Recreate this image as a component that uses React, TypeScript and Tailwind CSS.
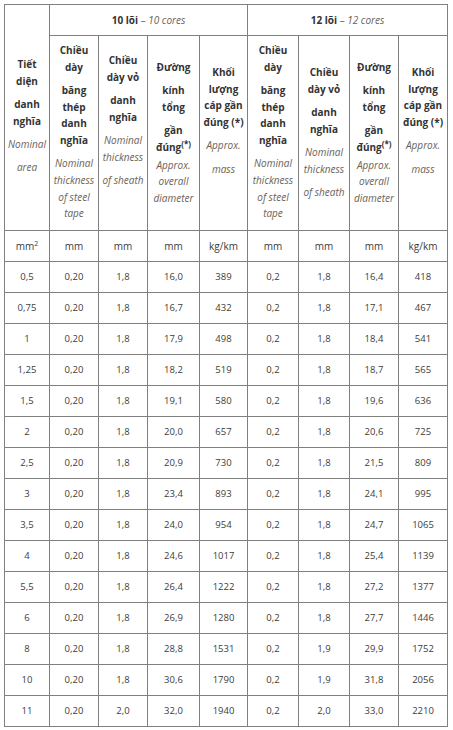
import React from "react";

const B = (props: { children: React.ReactNode }) => (
  <span className="font-bold text-[#333333]">{props.children}</span>
);
const I = (props: { children: React.ReactNode }) => (
  <span className="italic text-[#6a6258]">{props.children}</span>
);

const Sup = () => (
  <span className="relative -top-[4px] text-[8px] font-bold">(*)</span>
);

function HeaderCell(props: { pt: string; paras: React.ReactNode[][]; span?: string }) {
  return (
    <div className={`bg-white flex flex-col items-center text-center ${props.pt} ${props.span ?? ""}`}>
      {props.paras.map((p, i) => (
        <div key={i} className={i === 0 ? "" : "mt-[6.5px]"}>
          {p.map((l, j) => (
            <div key={j} className="leading-[16.7px] whitespace-nowrap">
              {l}
            </div>
          ))}
        </div>
      ))}
    </div>
  );
}

const colThick = (pt: string) => (
  <HeaderCell
    pt={pt}
    paras={[
      [<B>Chiều</B>, <B>dày</B>],
      [<B>băng</B>, <B>thép</B>, <B>danh</B>, <B>nghĩa</B>],
      [<I>Nominal</I>, <I>thickness</I>, <I>of steel</I>, <I>tape</I>],
    ]}
  />
);

const colSheath = (pt: string) => (
  <HeaderCell
    pt={pt}
    paras={[
      [<B>Chiều</B>, <B>dày vỏ</B>],
      [<B>danh</B>, <B>nghĩa</B>],
      [<I>Nominal</I>, <I>thickness</I>],
      [<I>of sheath</I>],
    ]}
  />
);

const colDiam = (pt: string) => (
  <HeaderCell
    pt={pt}
    paras={[
      [<B>Đường</B>],
      [<B>kính</B>, <B>tổng</B>],
      [
        <B>gần</B>,
        <B>
          đúng
          <Sup />
        </B>,
        <I>Approx.</I>,
        <I>overall</I>,
        <I>diameter</I>,
      ],
    ]}
  />
);

const colMass = (pt: string) => (
  <HeaderCell
    pt={pt}
    paras={[
      [<B>Khối</B>, <B>lượng</B>, <B>cáp gần</B>, <B>đúng (*)</B>],
      [<I>Approx.</I>],
      [<I>mass</I>],
    ]}
  />
);

const rows: string[][] = [
  ["0,5", "0,20", "1,8", "16,0", "389", "0,2", "1,8", "16,4", "418"],
  ["0,75", "0,20", "1,8", "16,7", "432", "0,2", "1,8", "17,1", "467"],
  ["1", "0,20", "1,8", "17,9", "498", "0,2", "1,8", "18,4", "541"],
  ["1,25", "0,20", "1,8", "18,2", "519", "0,2", "1,8", "18,7", "565"],
  ["1,5", "0,20", "1,8", "19,1", "580", "0,2", "1,8", "19,6", "636"],
  ["2", "0,20", "1,8", "20,0", "657", "0,2", "1,8", "20,6", "725"],
  ["2,5", "0,20", "1,8", "20,9", "730", "0,2", "1,8", "21,5", "809"],
  ["3", "0,20", "1,8", "23,4", "893", "0,2", "1,8", "24,1", "995"],
  ["3,5", "0,20", "1,8", "24,0", "954", "0,2", "1,8", "24,7", "1065"],
  ["4", "0,20", "1,8", "24,6", "1017", "0,2", "1,8", "25,4", "1139"],
  ["5,5", "0,20", "1,8", "26,4", "1222", "0,2", "1,8", "27,2", "1377"],
  ["6", "0,20", "1,8", "26,9", "1280", "0,2", "1,8", "27,7", "1446"],
  ["8", "0,20", "1,8", "28,8", "1531", "0,2", "1,9", "29,9", "1752"],
  ["10", "0,20", "1,8", "30,6", "1790", "0,2", "1,9", "31,8", "2056"],
  ["11", "0,20", "2,0", "32,0", "1940", "0,2", "2,0", "33,0", "2210"],
];

const units: React.ReactNode[] = [
  <span>
    mm<span className="relative -top-[4px] text-[7px]">2</span>
  </span>,
  "mm",
  "mm",
  "mm",
  "kg/km",
  "mm",
  "mm",
  "mm",
  "kg/km",
];

export default function App() {
  return (
    <div
      className="bg-white w-[453px] h-[730px] pt-[4px] pl-[4px] text-[10px] text-[#3c3c3c]"
      style={{ fontFamily: '"Open Sans", "Noto Sans", sans-serif' }}
    >
      <div className="grid w-[444px] grid-cols-[44px_48px_48px_51px_47px_50px_50px_48px_48px] grid-rows-[30px_194px_30px_repeat(15,30px)] gap-px bg-[#808080] p-px">
        <HeaderCell
          pt="pt-[51px]"
          span="row-span-2"
          paras={[
            [<B>Tiết</B>, <B>diện</B>],
            [<B>danh</B>, <B>nghĩa</B>],
            [<I>Nominal</I>],
            [<I>area</I>],
          ]}
        />
        <div className="col-span-4 bg-white flex items-center justify-center whitespace-nowrap">
          <B>10 lõi</B>
          <span className="text-[#6a6258]">&nbsp;–&nbsp;</span>
          <I>10 cores</I>
        </div>
        <div className="col-span-4 bg-white flex items-center justify-center whitespace-nowrap">
          <B>12 lõi</B>
          <span className="text-[#6a6258]">&nbsp;–&nbsp;</span>
          <I>12 cores</I>
        </div>
        {colThick("pt-[6px]")}
        {colSheath("pt-[16px]")}
        {colDiam("pt-[23px]")}
        {colMass("pt-[28px]")}
        {colThick("pt-[6px]")}
        {colSheath("pt-[28px]")}
        {colDiam("pt-[23px]")}
        {colMass("pt-[28px]")}
        {units.map((u, i) => (
          <div key={"u" + i} className="bg-white flex items-center justify-center">
            {u}
          </div>
        ))}
        {rows.map((r, ri) =>
          r.map((c, ci) => (
            <div
              key={ri + "-" + ci}
              className="bg-white flex items-center justify-center text-[9.5px]"
            >
              {c}
            </div>
          ))
        )}
      </div>
    </div>
  );
}
